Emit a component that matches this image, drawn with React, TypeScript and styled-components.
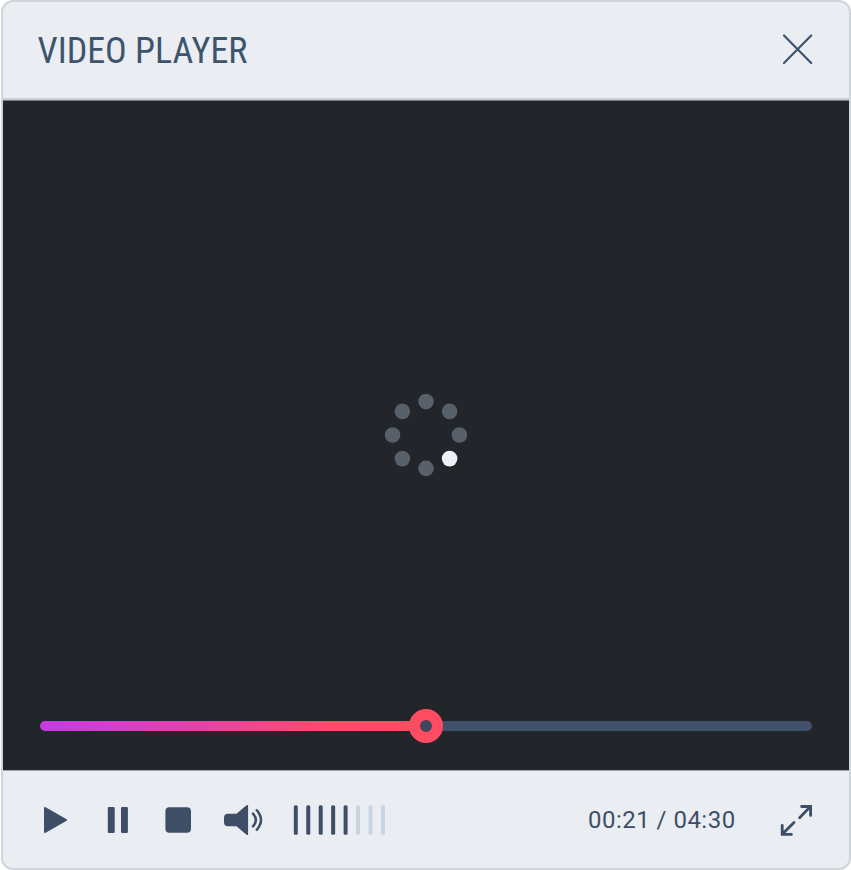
import React from 'react';
import styled, { createGlobalStyle } from 'styled-components';

const ink = '#3e4e66';
const titleInk = '#3e546c';
const panel = '#eaeef3';
const line = '#cfd5db';

const GlobalStyle = createGlobalStyle`
  *, *::before, *::after { box-sizing: border-box; }
  body { margin: 0; background: #fff; }
`;

const Player = styled.section`
  display: grid;
  grid-template-rows: 98px 671px 1fr;
  width: 850px;
  height: 870px;
  margin-left: 1px;
  overflow: hidden;
  border: 2px solid ${line};
  border-radius: 12px;
  background: ${panel};
  color: ${ink};
  font-family: Roboto, 'Liberation Sans', sans-serif;
`;

const Header = styled.header`
  display: flex;
  align-items: center;
  justify-content: space-between;
  padding: 0 36px 2px 34.5px;
  border-bottom: 2px solid #c9cfd5;
`;

const Title = styled.h1`
  margin: 4px 0 0;
  color: ${titleInk};
  font-family: 'Roboto Condensed', Roboto, sans-serif;
  font-stretch: 75%;
  font-size: 36px;
  font-weight: 400;
  line-height: 42px;
`;

const IconButton = styled.button<{ $gap?: number }>`
  display: flex;
  padding: 0;
  margin: 0 ${({ $gap = 0 }) => $gap}px 0 0;
  border: 0;
  background: none;
  color: inherit;
  cursor: pointer;

  svg { display: block; overflow: visible; }
`;

const Screen = styled.main`
  display: grid;
  grid-template-rows: 1fr 88px;
  background: #222529;
  border-top: 1px solid #75797d;
  border-bottom: 1px solid #a0a3a7;
`;

const SpinnerArea = styled.div`
  display: flex;
  align-items: center;
  justify-content: center;
  padding-top: 86px;

  svg { display: block; }
`;

const Track = styled.div`
  display: flex;
  align-items: center;
  height: 34px;
  margin: 27px 37.4px 0 37.4px;
`;

const Played = styled.div`
  flex: 0 0 371px;
  height: 10px;
  margin-right: -2px;
  border-radius: 5px 0 0 5px;
  background: linear-gradient(90deg, #c63be2 0%, #d63dcb 20%, #ff4c68 80%, #ff4c62 100%);
`;

const Thumb = styled.div`
  flex: none;
  z-index: 1;
  width: 34px;
  height: 34px;
  border: 11px solid #ff4c63;
  border-radius: 50%;
  background: #3d475d;
`;

const Remaining = styled.div`
  flex: 1;
  height: 10px;
  margin-left: -2px;
  border-radius: 0 5px 5px 0;
  background: #41516a;
`;

const Controls = styled.footer`
  display: flex;
  align-items: center;
  padding: 1px 37px 0 41px;
`;

const VolumeBars = styled.div`
  svg { display: block; }
`;

const VolumeBar = styled.rect<{ $active: boolean }>`
  fill: ${({ $active }) => ($active ? ink : '#cad4e1')};
`;

const Time = styled.time`
  margin: 0 44.4px 0 auto;
  font-size: 24px;
  line-height: 28px;
  letter-spacing: 0.48px;
  white-space: nowrap;
`;

const dots = Array.from({ length: 8 }, (_, i) => {
  const a = (i * Math.PI) / 4;
  return { x: 41 + 33.4 * Math.cos(a), y: 41 + 33.4 * Math.sin(a), lit: i === 1 };
});

const Spinner = () => (
  <svg width="82" height="82" viewBox="0 0 82 82" aria-label="Loading">
    {dots.map((d, i) => (
      <circle key={i} cx={d.x} cy={d.y} r="7.8" fill={d.lit ? '#eef1f6' : '#58616a'} />
    ))}
  </svg>
);

export default function App() {
  return (
    <>
      <GlobalStyle />
      <Player>
        <Header>
          <Title>VIDEO PLAYER</Title>
          <IconButton aria-label="Close">
            <svg width="31" height="31" viewBox="0 0 31 31" fill="none" stroke={titleInk} strokeWidth="2.2" strokeLinecap="round">
              <path d="M2 1.5 29.2 29M29.2 1.5 2 29" />
            </svg>
          </IconButton>
        </Header>
        <Screen>
          <SpinnerArea>
            <Spinner />
          </SpinnerArea>
          <Track>
            <Played />
            <Thumb />
            <Remaining />
          </Track>
        </Screen>
        <Controls>
          <IconButton aria-label="Play" $gap={39}>
            <svg width="24" height="26" viewBox="0 0 24 26" fill="currentColor">
              <path d="M0 1.2Q0-.5 1.6.2L22.6 12.2Q23.8 13 22.6 13.8L1.6 25.8Q0 26.5 0 24.8Z" />
            </svg>
          </IconButton>
          <IconButton aria-label="Pause" $gap={37}>
            <svg width="21" height="26" viewBox="0 0 21 26" fill="currentColor">
              <rect x=".8" width="6.9" height="26" rx="1.2" />
              <rect x="14" width="6.9" height="26" rx="1.2" />
            </svg>
          </IconButton>
          <IconButton aria-label="Stop" $gap={33}>
            <svg width="26" height="26" viewBox="0 0 26 26" fill="currentColor">
              <rect x=".4" y="0.2" width="25.6" height="25.6" rx="4" />
            </svg>
          </IconButton>
          <IconButton aria-label="Mute" $gap={30}>
            <svg width="39" height="30" viewBox="0 0 39 30" fill="none">
              <path fill="currentColor" d="M4 8.7H12.5L22.2.5Q24.1-.8 24.1 1.2V28.8Q24.1 30.8 22.2 29.5L12.5 21.3H4Q0 21.3 0 17.3V12.7Q0 8.7 4 8.7Z" />
              <path stroke="currentColor" strokeWidth="2.5" strokeLinecap="round" d="M29 8.7Q34.8 15 29 21.3M32.8 5.3Q41.2 15 32.8 24.7" />
            </svg>
          </IconButton>
          <VolumeBars aria-label="Volume">
            <svg width="93" height="30" viewBox="0 0 93 30">
              {Array.from({ length: 8 }, (_, i) => (
                <VolumeBar key={i} x={0.8 + i * 12.45} y="0.3" width="4" height="29.4" rx="1.5" $active={i < 5} />
              ))}
            </svg>
          </VolumeBars>
          <Time>00:21 / 04:30</Time>
          <IconButton aria-label="Full screen">
            <svg width="32" height="31" viewBox="0 0 32 31" fill="none" stroke="currentColor" strokeWidth="2.8" strokeLinecap="round">
              <path d="M19.6 12.8 30.3 1.6M21.6 1.5H30.6V10.4M14 17.5 2.2 29.3M2.2 20.3V29.4H11.4" />
            </svg>
          </IconButton>
        </Controls>
      </Player>
    </>
  );
}
